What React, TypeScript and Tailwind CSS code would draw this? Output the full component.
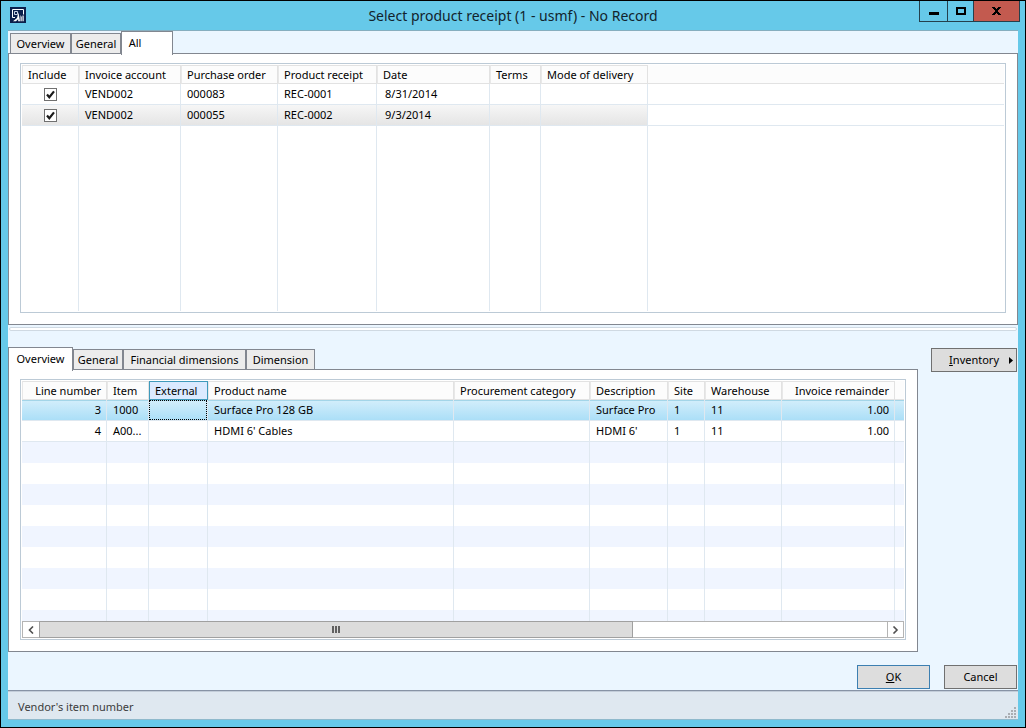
import React from "react";

interface Column {
  title: string;
  width?: number;
  right?: boolean;
  active?: boolean;
}

interface Tab {
  title: string;
  width: string;
}

interface TabStripProps {
  label: string;
  tabs: Tab[];
  selected: string;
}

const receiptColumns: Column[] = [
  { title: "Include", width: 57 },
  { title: "Invoice account", width: 102 },
  { title: "Purchase order", width: 97 },
  { title: "Product receipt", width: 99 },
  { title: "Date", width: 113 },
  { title: "Terms", width: 51 },
  { title: "Mode of delivery", width: 107 },
];

const receipts = [
  { account: "VEND002", order: "000083", receipt: "REC-0001", date: "8/31/2014" },
  { account: "VEND002", order: "000055", receipt: "REC-0002", date: "9/3/2014" },
];

const lineColumns: Column[] = [
  { title: "Line number", width: 85, right: true },
  { title: "Item", width: 42 },
  { title: "External", width: 59, active: true },
  { title: "Product name", width: 246 },
  { title: "Procurement category", width: 136 },
  { title: "Description", width: 78 },
  { title: "Site", width: 37 },
  { title: "Warehouse", width: 77 },
  { title: "Invoice remainder", width: 113, right: true },
];

const lines = [
  ["3", "1000", "", "Surface Pro 128 GB", "", "Surface Pro", "1", "11", "1.00"],
  ["4", "A00...", "", "HDMI 6' Cables", "", "HDMI 6'", "1", "11", "1.00"],
];

const emptyRows = Array.from({ length: 30 }, (_, index) => index);

const TabStrip: React.FC<TabStripProps> = ({ label, tabs, selected }) => (
  <div role="tablist" aria-label={label} className="flex items-end h-[22px]">
    {tabs.map((tab) =>
      tab.title === selected ? (
        <button
          key={tab.title}
          role="tab"
          aria-selected="true"
          className={`relative z-10 -mb-[2px] h-6 pb-px border border-b-0 border-[#828790] bg-white text-center ${tab.width}`}
        >
          {tab.title}
        </button>
      ) : (
        <button
          key={tab.title}
          role="tab"
          aria-selected="false"
          className={`h-5 border border-b-0 border-[#828790] bg-[#ececec] text-center whitespace-nowrap ${tab.width}`}
        >
          {tab.title}
        </button>
      )
    )}
  </div>
);

const GridHead: React.FC<{ columns: Column[] }> = ({ columns }) => (
  <>
    <colgroup>
      {columns.map((column) => (
        <col key={column.title} style={{ width: column.width }} />
      ))}
      <col />
    </colgroup>
    <thead>
      <tr className="h-[19px]">
        {columns.map((column) => (
          <th
            key={column.title}
            className={`p-0 px-[5px] border font-normal whitespace-nowrap leading-4 ${
              column.active
                ? "border-[#3f9abb] bg-[#dbeaff]"
                : "border-[#e2e2e2] border-l-[#e8e8e8] bg-[#fcfcfc]"
            } ${column.right ? "text-right" : "text-left"}`}
          >
            {column.title}
          </th>
        ))}
        <td className="p-0 border-b border-[#e2e2e2] bg-[#fcfcfc]" />
      </tr>
    </thead>
  </>
);

const CheckBox: React.FC<{ label: string }> = ({ label }) => (
  <label className="grid place-items-center">
    <input
      type="checkbox"
      defaultChecked
      aria-label={label}
      className="peer appearance-none [grid-area:1/1] size-[13px] border border-[#707070] bg-white"
    />
    <svg
      viewBox="0 0 13 13"
      className="invisible peer-checked:visible pointer-events-none [grid-area:1/1] size-[13px]"
    >
      <path d="M3 6.5 5.3 9.2 10 3.4" fill="none" stroke="#1a1a1a" strokeWidth="2.200" />
    </svg>
  </label>
);

const receiptPadding = ["", "pl-[6px]", "pl-[6px]", "pl-[6px]", "pl-2", "", ""];

const ReceiptGrid: React.FC = () => (
  <div className="flex-1 min-h-0 p-px border border-[#bccad6] overflow-hidden">
    <table className="w-full h-full table-fixed border-separate border-spacing-0">
      <GridHead columns={receiptColumns} />
      <tbody>
        {receipts.map((row, index) => (
          <tr key={row.receipt} className="h-[21px]">
            {[
              <CheckBox key="include" label={`Include ${row.receipt}`} />,
              row.account,
              row.order,
              row.receipt,
              row.date,
              "",
              "",
            ].map((value, col) => (
              <td
                key={col}
                className={`py-0 pr-0 border-r border-b border-[#dfe8f0] ${receiptPadding[col]} ${
                  index === 1 ? "bg-linear-to-b from-[#f6f6f6] to-[#e5e5e5]" : ""
                }`}
              >
                {value}
              </td>
            ))}
            <td className="p-0 border-b border-[#dfe8f0]" />
          </tr>
        ))}
        <tr>
          {receiptColumns.map((column) => (
            <td key={column.title} className="p-0 border-r border-[#dfe8f0]" />
          ))}
          <td className="p-0" />
        </tr>
      </tbody>
    </table>
  </div>
);

const LineGrid: React.FC = () => (
  <div className="flex flex-col flex-1 min-h-0 p-px border border-[#bccad6]">
    <div className="flex-1 min-h-0 overflow-hidden">
      <table className="w-full table-fixed border-separate border-spacing-0">
        <GridHead columns={lineColumns} />
        <tbody>
          {lines.map((row, index) => (
            <tr
              key={row[0]}
              className={`h-[21px] ${
                index === 0
                  ? "bg-linear-to-b from-[#d3eefb] to-[#a9def7] shadow-[inset_0_1px_0_#a3d5e8]"
                  : ""
              }`}
            >
              {row.map((value, col) => (
                <td
                  key={col}
                  className={`py-0 border-r border-b border-[#dfe8f0] whitespace-nowrap ${
                    lineColumns[col].right
                      ? "pr-[5px] text-right"
                      : lineColumns[col].active
                        ? "px-0"
                        : "pl-[6px]"
                  }`}
                >
                  {index === 0 && lineColumns[col].active ? (
                    <div className="h-5 border border-dotted border-black">{value}</div>
                  ) : (
                    value
                  )}
                </td>
              ))}
              <td className="p-0 border-b border-[#dfe8f0]" />
            </tr>
          ))}
          {emptyRows.map((row) => (
            <tr key={row} className="h-[21px] odd:bg-[#f0f5ff]">
              {lineColumns.map((column) => (
                <td key={column.title} className="p-0 border-r border-[#dfe8f0]" />
              ))}
              <td className="p-0" />
            </tr>
          ))}
        </tbody>
      </table>
    </div>
    <div className="flex h-[17px] border border-[#b4b4b4] bg-white">
      <button aria-label="Scroll left" className="grid place-items-center w-4">
        <svg viewBox="0 0 7 8" className="w-[7px] h-2">
          <path d="M5 .5 1.500 4 5 7.500" fill="none" stroke="#505050" strokeWidth="1.6" />
        </svg>
      </button>
      <div className="flex flex-1">
        <div className="grid place-items-center w-[70%] -my-px border border-[#a0a0a0] bg-[#dcdcdc]">
          <svg viewBox="0 0 8 7" className="w-2 h-[7px]" shapeRendering="crispEdges">
            <path d="M0 0h2v7H0zM3 0h2v7H3zM6 0h2v7H6z" fill="#606060" />
          </svg>
        </div>
      </div>
      <button
        aria-label="Scroll right"
        className="grid place-items-center w-4 border-l border-[#b4b4b4]"
      >
        <svg viewBox="0 0 7 8" className="w-[7px] h-2">
          <path d="M1.5 .5 5 4 1.5 7.5" fill="none" stroke="#505050" strokeWidth="1.6" />
        </svg>
      </button>
    </div>
  </div>
);

const TitleBar: React.FC = () => (
  <header className="grid grid-cols-[1fr_auto_1fr] h-[29px]">
    <svg viewBox="0 0 16 16" className="size-4 ml-[9px] mt-[6px]">
      <rect width="16" height="16" fill="#0b1f4b" />
      <path d="M2.5 10.5v-8h11v5M2.5 10.5H5" fill="none" stroke="#fff" />
      <path d="M4.500 4.500h3v3h-3z" fill="none" stroke="#c9d3e6" />
      <path d="M3 14.200 7 11l1.500-5.500L10 14.200H8.200V12L6 14.200z" fill="#fff" />
      <path d="M10.500 8l1.200 2v4.200h-1.200zM12.500 8.500h1.200v5.700h-1.200z" fill="#fff" />
    </svg>
    <h1 className="text-sm leading-[29px] text-[#12232c]">
      Select product receipt (1 - usmf) - No Record
    </h1>
    <div className="flex justify-self-end h-[21px] mr-[5px] border border-t-0 border-[#24404c]">
      <button aria-label="Minimize" className="grid place-items-center w-7 border-r border-[#24404c]">
        <svg viewBox="0 0 10 8" className="w-[10px] h-2" shapeRendering="crispEdges">
          <path d="M0 5h10v3H0z" />
        </svg>
      </button>
      <button aria-label="Maximize" className="grid place-items-center w-[26px] border-r border-[#24404c]">
        <svg viewBox="0 0 10 8" className="w-[10px] h-2" shapeRendering="crispEdges">
          <path d="M0 0h10v8H0zM2 2v4h6V2z" fillRule="evenodd" />
        </svg>
      </button>
      <button aria-label="Close" className="grid place-items-center w-[45px] bg-[#c35a4f]">
        <svg viewBox="0 0 9 8" className="w-[9px] h-2" shapeRendering="crispEdges">
          <path d="M0 0h3v1h1v1h1V1h1V0h3v1H8v1H7v1H6v2h1v1h1v1h1v1H6V7H5V6H4v1H3v1H0V7h1V6h1V5h1V3H2V2H1V1H0z" />
        </svg>
      </button>
    </div>
  </header>
);

const App: React.FC = () => {
  return (
    <div className="flex flex-col h-screen border border-black bg-[#66c9e9] font-['Noto_Sans','Open_Sans',sans-serif] text-[11px] leading-4 text-black">
      <TitleBar />
      <main className="flex flex-col flex-1 min-h-0 mx-[7px] mb-[7px] border-t border-[#86aebf] bg-[#ebf6ff]">
        <section className="flex flex-col grow basis-[294px] min-h-0">
          <div className="pl-[2px]">
            <TabStrip
              label="Receipts"
              selected="All"
              tabs={[
                { title: "Overview", width: "w-[61px]" },
                { title: "General", width: "w-[50px]" },
                { title: "All", width: "w-[52px] pr-6" },
              ]}
            />
          </div>
          <div className="flex flex-col flex-1 min-h-0 px-[11px] pt-[9px] pb-[11px] border border-[#828790] bg-white">
            <ReceiptGrid />
          </div>
        </section>

        <div className="h-1 mt-[2px] mb-px mx-px rounded-sm border border-[#cfd9e2] bg-white" />

        <section className="flex grow basis-[320px] min-h-0 pt-[15px] pr-px gap-[13px]">
          <div className="flex flex-col flex-1 min-w-0">
            <TabStrip
              label="Lines"
              selected="Overview"
              tabs={[
                { title: "Overview", width: "w-[65px]" },
                { title: "General", width: "w-[50px]" },
                { title: "Financial dimensions", width: "w-[123px]" },
                { title: "Dimension", width: "w-[69px]" },
              ]}
            />
            <div className="flex flex-col flex-1 min-h-0 px-[11px] pt-[9px] pb-[11px] border border-[#828790] bg-white">
              <LineGrid />
            </div>
          </div>
          <button className="flex items-center justify-end w-[86px] h-6 mt-px pr-[3px] gap-[10px] border border-[#707070] bg-[#dddddd]">
            <span>
              <u>I</u>nventory
            </span>
            <svg viewBox="0 0 4 7" className="w-1 h-[7px]">
              <path d="M0 0 4 3.500 0 7z" />
            </svg>
          </button>
        </section>

        <div className="flex justify-end gap-[14px] pt-[13px] pb-px pr-px">
          <button className="w-[73px] h-6 border border-[#3c7fb1] bg-[#dddddd]">
            <u>O</u>K
          </button>
          <button className="w-[73px] h-6 border border-[#707070] bg-[#dddddd]">Cancel</button>
        </div>

        <footer className="flex items-center justify-between h-[30px] pl-[10px] pr-[2px] border-t border-b border-t-[#8793a5] border-b-[#8fb9cc] bg-[#dfe8f0] text-[#3c3c3c] shadow-[inset_0_1px_0_#c3cdd9]">
          <span className="pt-1">Vendor's item number</span>
          <svg viewBox="0 0 11 11" className="size-[11px] self-end mb-px" shapeRendering="crispEdges">
            <path
              d="M0 9h2v2H0zM3 9h2v2H3zM6 9h2v2H6zM9 9h2v2H9zM3 6h2v2H3zM6 6h2v2H6zM9 6h2v2H9zM6 3h2v2H6zM9 3h2v2H9zM9 0h2v2H9z"
              fill="#a9adb2"
            />
          </svg>
        </footer>
      </main>
    </div>
  );
};

export default App;
